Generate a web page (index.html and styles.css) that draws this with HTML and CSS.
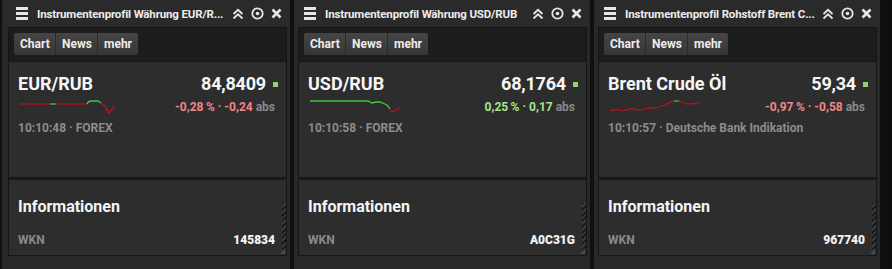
FILE: index.html
```html
<!DOCTYPE html>
<html lang="de">
<head>
<meta charset="UTF-8">
<meta name="viewport" content="width=device-width, initial-scale=1.0">
<title>Instrumentenprofile</title>
<link rel="stylesheet" href="styles.css">
</head>
<body>
<div class="desk">

    <!-- EUR/RUB -->
    <section class="panel panel-first">
        <header class="panel-head">
            <span class="menu"><i></i><i></i><i></i></span>
            <h1 class="panel-title">Instrumentenprofil Währung EUR/R...</h1>
            <span class="tools">
                <svg width="12" height="12" viewBox="0 0 12 12"><path d="M1.5 6 L6 1.8 L10.5 6 M1.5 10.5 L6 6.3 L10.5 10.5" fill="none" stroke="#e6e6e6" stroke-width="1.8"/></svg>
                <svg width="13" height="13" viewBox="0 0 13 13"><circle cx="6.5" cy="6.5" r="5.2" fill="none" stroke="#e6e6e6" stroke-width="1.8"/><circle cx="6.5" cy="6.5" r="1.8" fill="#e6e6e6"/></svg>
                <svg width="11" height="11" viewBox="0 0 11 11"><path d="M1.5 1.5 L9.5 9.5 M9.5 1.5 L1.5 9.5" stroke="#e6e6e6" stroke-width="2.6"/></svg>
            </span>
        </header>
        <div class="panel-body">
            <nav class="tabs"><button>Chart</button><button>News</button><button>mehr</button></nav>
            <div class="quote">
                <div class="quote-top">
                    <span class="quote-name">EUR/RUB</span>
                    <span class="quote-price">84,8409<i class="tick"></i></span>
                </div>
                <div class="quote-mid">
                    <svg class="spark" width="100" height="16" viewBox="0 0 100 16">
                        <path d="M0 5 L30 5" class="sp-red"/>
                        <path d="M30 5 L36 5" class="sp-green"/>
                        <path d="M36 5 L67 5" class="sp-red"/>
                        <path d="M67 5 C68 2 70 2 72 2 L78 2 L81 4" class="sp-green"/>
                        <path d="M81 4 L86 8 L89 14 L95 7 M86 10 L89 14" class="sp-red"/>
                    </svg>
                    <span class="change neg">-0,28&thinsp;% · -0,24 <em>abs</em></span>
                </div>
                <div class="quote-meta">10:10:48 · FOREX</div>
            </div>
            <div class="info">
                <h2>Informationen</h2>
                <div class="info-row"><span>WKN</span><b>145834</b></div>
                <span class="grip"></span>
            </div>
        </div>
    </section>

    <!-- USD/RUB -->
    <section class="panel panel-wide">
        <header class="panel-head">
            <span class="menu"><i></i><i></i><i></i></span>
            <h1 class="panel-title">Instrumentenprofil Währung USD/RUB</h1>
            <span class="tools">
                <svg width="12" height="12" viewBox="0 0 12 12"><path d="M1.5 6 L6 1.8 L10.5 6 M1.5 10.5 L6 6.3 L10.5 10.5" fill="none" stroke="#e6e6e6" stroke-width="1.8"/></svg>
                <svg width="13" height="13" viewBox="0 0 13 13"><circle cx="6.5" cy="6.5" r="5.2" fill="none" stroke="#e6e6e6" stroke-width="1.8"/><circle cx="6.5" cy="6.5" r="1.8" fill="#e6e6e6"/></svg>
                <svg width="11" height="11" viewBox="0 0 11 11"><path d="M1.5 1.5 L9.5 9.5 M9.5 1.5 L1.5 9.5" stroke="#e6e6e6" stroke-width="2.6"/></svg>
            </span>
        </header>
        <div class="panel-body">
            <nav class="tabs"><button>Chart</button><button>News</button><button>mehr</button></nav>
            <div class="quote">
                <div class="quote-top">
                    <span class="quote-name">USD/RUB</span>
                    <span class="quote-price">68,1764<i class="tick"></i></span>
                </div>
                <div class="quote-mid">
                    <svg class="spark" width="100" height="16" viewBox="0 0 100 16">
                        <path d="M0 2 L58 2 L62 4 L66 3 L70 3 L77 6 L80 10" class="sp-green"/>
                        <path d="M80 10 L82 13 L91 8" class="sp-red"/>
                    </svg>
                    <span class="change pos">0,25&thinsp;% · 0,17 <em>abs</em></span>
                </div>
                <div class="quote-meta">10:10:58 · FOREX</div>
            </div>
            <div class="info">
                <h2>Informationen</h2>
                <div class="info-row"><span>WKN</span><b>A0C31G</b></div>
                <span class="grip"></span>
            </div>
        </div>
    </section>

    <!-- Brent -->
    <section class="panel panel-last">
        <header class="panel-head">
            <span class="menu"><i></i><i></i><i></i></span>
            <h1 class="panel-title">Instrumentenprofil Rohstoff Brent C...</h1>
            <span class="tools">
                <svg width="12" height="12" viewBox="0 0 12 12"><path d="M1.5 6 L6 1.8 L10.5 6 M1.5 10.5 L6 6.3 L10.5 10.5" fill="none" stroke="#e6e6e6" stroke-width="1.8"/></svg>
                <svg width="13" height="13" viewBox="0 0 13 13"><circle cx="6.5" cy="6.5" r="5.2" fill="none" stroke="#e6e6e6" stroke-width="1.8"/><circle cx="6.5" cy="6.5" r="1.8" fill="#e6e6e6"/></svg>
                <svg width="11" height="11" viewBox="0 0 11 11"><path d="M1.5 1.5 L9.5 9.5 M9.5 1.5 L1.5 9.5" stroke="#e6e6e6" stroke-width="2.6"/></svg>
            </span>
        </header>
        <div class="panel-body">
            <nav class="tabs"><button>Chart</button><button>News</button><button>mehr</button></nav>
            <div class="quote">
                <div class="quote-top">
                    <span class="quote-name">Brent Crude Öl</span>
                    <span class="quote-price">59,34<i class="tick"></i></span>
                </div>
                <div class="quote-mid">
                    <svg class="spark" width="100" height="16" viewBox="0 0 100 16">
                        <path d="M0 12 C4 11 6 10 9 11 C12 12 15 12 19 10 C23 9 26 11 30 11 C34 11 36 9 40 9 C45 9 50 8 55 6 C59 4 61 2 64 2" class="sp-red"/>
                        <path d="M64 2 L69 2" class="sp-green"/>
                        <path d="M69 2 C72 3 74 5 78 5 C82 5 84 4 89 4" class="sp-red"/>
                    </svg>
                    <span class="change neg">-0,97&thinsp;% · -0,58 <em>abs</em></span>
                </div>
                <div class="quote-meta">10:10:57 · Deutsche Bank Indikation</div>
            </div>
            <div class="info">
                <h2>Informationen</h2>
                <div class="info-row"><span>WKN</span><b>967740</b></div>
                <span class="grip"></span>
            </div>
        </div>
    </section>

</div>
</body>
</html>
```

FILE: styles.css
```css
* {
    box-sizing: border-box;
}
body {
    margin: 0;
    background: #0e0e0e;
    font-family: Roboto, "Liberation Sans", sans-serif;
    color: #f2f2f2;
}
.desk {
    display: flex;
    height: 269px;
    overflow: hidden;
}

/* panel frame */
.panel {
    display: flex;
    flex-direction: column;
    height: 269px;
    background: #282828;
    border-left: 2px solid #101010;
    border-right: 2px solid #101010;
    padding: 0 3px 0 4px;
}
.panel-first {
    width: 292px;
    padding-left: 6px;
}
.panel-wide {
    width: 300px;
}
.panel-last {
    width: 290px;
}

/* header */
.panel-head {
    height: 27px;
    display: flex;
    align-items: center;
    padding-left: 6px;
    background: #2a2a2a;
    margin: 0 -3px 0 -4px;
    padding-right: 8px;
}
.panel-first .panel-head {
    margin-left: -6px;
    padding-left: 12px;
}
.panel-head .menu {
    display: flex;
    flex-direction: column;
    gap: 1.6px;
    width: 12px;
    margin-left: 4px;
    flex-shrink: 0;
}
.panel-first .panel-head .menu {
    margin-left: 2px;
}
.menu i {
    display: block;
    height: 3px;
    background: #e6e6e6;
}
.panel-title {
    flex: 1;
    margin: 0 0 0 9px;
    font-size: 11.5px;
    font-weight: 700;
    color: #ececec;
    white-space: nowrap;
    overflow: hidden;
    letter-spacing: -0.15px;
}
.tools {
    display: flex;
    align-items: center;
    gap: 7px;
    margin-left: 3px;
    flex-shrink: 0;
}
.tools svg {
    display: block;
}

/* inner column */
.panel-body {
    display: flex;
    flex-direction: column;
}
.tabs {
    height: 34px;
    display: flex;
    align-items: flex-start;
    padding: 5px 0 0 5px;
    background: #1c1c1c;
    border: 1px solid #141414;
    border-bottom: 0;
}
.tabs button {
    height: 22px;
    padding: 0 6px;
    border: none;
    border-right: 1px solid #2a2a2a;
    background: linear-gradient(#454545, #363636);
    color: #ececec;
    font-family: inherit;
    font-size: 12px;
    font-weight: 700;
}
.tabs button:first-child {
    width: 42px;
    border-radius: 2px 0 0 2px;
}
.tabs button:nth-child(2) {
    width: 42px;
}
.tabs button:last-child {
    width: 40px;
    border-right: none;
    border-radius: 0 2px 2px 0;
}

/* quote */
.quote {
    height: 117px;
    padding: 10px 8px 0 9px;
    background: #2d2d2d;
    border: 1px solid #161616;
}
.quote-top {
    display: flex;
    justify-content: space-between;
    align-items: center;
    height: 22px;
    font-size: 18px;
    font-weight: 700;
    color: #f6f6f6;
}
.quote-price {
    letter-spacing: -0.2px;
}
.tick {
    display: inline-block;
    width: 5px;
    height: 5px;
    margin-left: 7px;
    background: #8fd46e;
    vertical-align: 3px;
}
.quote-mid {
    display: flex;
    justify-content: space-between;
    align-items: center;
    height: 18px;
    margin-top: 4px;
    padding-right: 3px;
}
.spark {
    display: block;
    margin-left: 2px;
}
.spark path {
    fill: none;
    stroke-width: 1.3;
}
.sp-red {
    stroke: #b3121f;
}
.sp-green {
    stroke: #3ec63e;
}
.change {
    font-size: 12px;
    font-weight: 700;
}
.change em {
    font-style: normal;
    color: #8a8a8a;
}
.neg {
    color: #ef8787;
}
.pos {
    color: #a7e38c;
}
.quote-meta {
    margin-top: 4px;
    line-height: 16px;
    font-size: 12px;
    font-weight: 700;
    color: #8c8c8c;
}

/* info */
.info {
    position: relative;
    height: 78px;
    padding: 17px 11px 0 9px;
    background: #2d2d2d;
    border: 1px solid #161616;
    border-top: 2px solid #1a1a1a;
}
.info h2 {
    margin: 0;
    font-size: 16px;
    line-height: 20px;
    font-weight: 700;
    color: #f4f4f4;
}
.info-row {
    display: flex;
    justify-content: space-between;
    margin-top: 15px;
    line-height: 16px;
    font-size: 12px;
    font-weight: 700;
}
.info-row span {
    color: #8a8a8a;
}
.info-row b {
    color: #f2f2f2;
}
.grip {
    position: absolute;
    right: 0;
    bottom: 6px;
    width: 4px;
    height: 46px;
    background: repeating-linear-gradient(135deg, #1a1a1a 0 2px, #3a3a3a 2px 4px);
}
.info::after {
    content: "";
    position: absolute;
    right: 1px;
    bottom: 1px;
    border-style: solid;
    border-width: 0 0 5px 5px;
    border-color: transparent transparent #4a4a4a transparent;
}
```
